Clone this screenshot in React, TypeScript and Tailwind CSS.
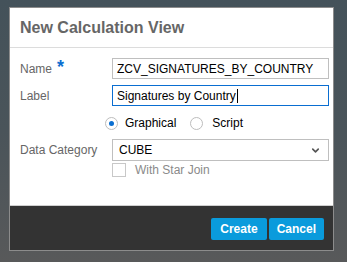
import { ChevronDown } from "lucide-react";

const font = { fontFamily: '"Liberation Sans", Arial, sans-serif' };

const App = () => {
  return (
    <div
      className="w-[347px] h-[262px] overflow-hidden bg-gradient-to-b from-[#44525a] via-[#4a545a] to-[#58595a] pl-[9px] pt-[7px]"
      style={font}
    >
      <div className="w-[325px] border border-[#8c8c8c] bg-white">
        {/* Header */}
        <div className="h-[40px] flex items-center px-[10px] border-b border-[#dcdcdc]">
          <h1 className="text-[16px] font-bold text-[#666666] leading-none">New Calculation View</h1>
        </div>

        {/* Body */}
        <div className="h-[157px] pl-[10px] pr-[3px] pt-[10px] flex flex-col">
          <div className="flex items-center h-[21px]">
            <label className="w-[92px] text-[12px] text-[#666666] flex items-center">
              Name
              <span className="ml-[5px] text-[18px] font-bold text-[#0a6ed1] leading-none -mt-[4px]">*</span>
            </label>
            <div className="w-[217px] h-[21px] border border-[#bfbfbf] px-[4px] flex items-center text-[12px] text-black">
              ZCV_SIGNATURES_BY_COUNTRY
            </div>
          </div>

          <div className="flex items-center h-[21px] mt-[6px]">
            <label className="w-[92px] text-[12px] text-[#666666]">Label</label>
            <div className="w-[217px] h-[21px] border border-[#0a6ed1] px-[4px] flex items-center text-[12px] text-black">
              Signatures by Country
              <span className="ml-[1px] w-px h-[14px] bg-black" />
            </div>
          </div>

          <div className="flex items-center h-[22px] mt-[6px] pl-[85px] text-[12px] text-black">
            <span className="w-[13px] h-[13px] rounded-full border border-[#bdbdbd] flex items-center justify-center">
              <span className="w-[5px] h-[5px] rounded-full bg-[#0a6ed1]" />
            </span>
            <span className="ml-[7px]">Graphical</span>
            <span className="ml-[14px] w-[13px] h-[13px] rounded-full border border-[#bdbdbd]" />
            <span className="ml-[9px]">Script</span>
          </div>

          <div className="flex items-center h-[22px] mt-[5px]">
            <label className="w-[92px] text-[12px] text-[#666666]">Data Category</label>
            <div className="w-[217px] h-[22px] border border-[#bfbfbf] pl-[6px] pr-[7px] flex items-center justify-between text-[12px] text-black">
              CUBE
              <ChevronDown className="w-[11px] h-[11px] text-[#555555]" strokeWidth={3.5} />
            </div>
          </div>

          <div className="flex items-center h-[16px] mt-[1px] pl-[92px]">
            <span className="w-[14px] h-[14px] border border-[#c8c8c8]" />
            <span className="ml-[9px] text-[12px] text-[#8a8a8a]">With Star Join</span>
          </div>
        </div>

        {/* Footer */}
        <div className="h-[45px] bg-[#333333] border-t border-[#cfcfcf] flex items-center justify-end gap-[2px] pr-[9px] pt-[1px]">
          <button className="h-[22px] px-[9px] rounded-[2px] bg-[#0a9bdc] text-white text-[12px] font-bold">Create</button>
          <button className="h-[22px] px-[8px] rounded-[2px] bg-[#0a9bdc] text-white text-[12px] font-bold">Cancel</button>
        </div>
      </div>
    </div>
  );
};

export default App;
